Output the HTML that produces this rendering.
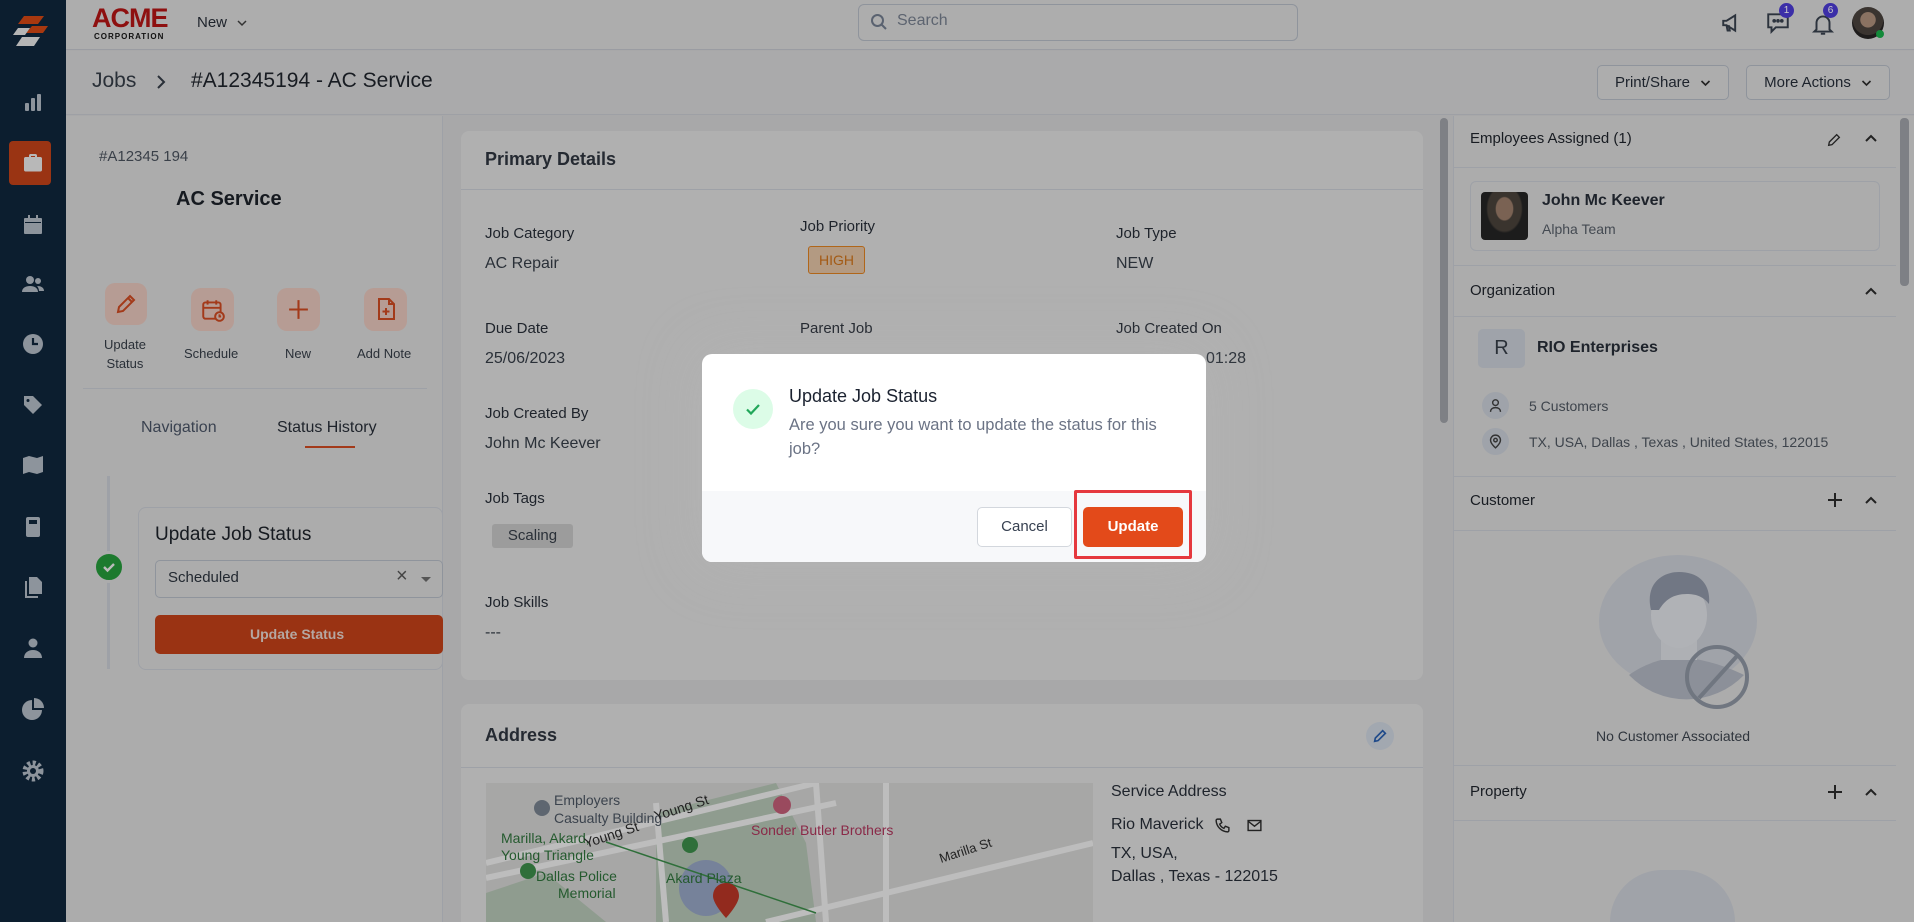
<!DOCTYPE html>
<html><head><meta charset="utf-8">
<style>
*{box-sizing:border-box;margin:0;padding:0}
html,body{width:1914px;height:922px;overflow:hidden}
body{background:#a8a8a9;font-family:"Liberation Sans",sans-serif;position:relative;color:#181c22}
.a{position:absolute}
.t{position:absolute;white-space:nowrap}
.ic{position:absolute;left:21px;width:24px;height:24px}
.btn{border:1px solid #8f949c;border-radius:5px;background:#adadad;font-size:15px;color:#1d232c;display:flex;align-items:center;justify-content:center;gap:10px}
.card{background:#b0b0b0;border-radius:8px}
.lbl{font-size:15px;color:#1e232b}
.val{font-size:16px;color:#2a3038}
.hl{position:absolute;height:1px;background:#9ea1a7}
.rt{font-size:15px;color:#181c22}
</style></head><body>

<div class="a" style="left:0;top:0;width:66px;height:922px;background:#0c1e2f">
  <svg class="a" style="left:10px;top:14px" width="40" height="40" viewBox="0 0 40 40"><polygon points="14,2 34,2 28,10 8,10" fill="#a8380f"/><polygon points="22,12 38,12 33,19 16,19" fill="#a8380f"/><polygon points="8,14 20,14 15,21 3,21" fill="#b5b5b5"/><polygon points="12,23 30,23 24,32 6,32" fill="#b5b5b5"/></svg>
  <svg class="ic" style="top:90px" viewBox="0 0 24 24" fill="#8d949c"><rect x="4" y="13" width="4" height="8" rx="1"/><rect x="10" y="8" width="4" height="13" rx="1"/><rect x="16" y="4" width="4" height="17" rx="1"/></svg>
  <div class="a" style="left:9px;top:141px;width:42px;height:44px;background:#9a3413;border-radius:4px"></div>
  <svg class="ic" style="top:151px" viewBox="0 0 24 24" fill="#b8b8b8"><path d="M8 6V4.5C8 3.7 8.7 3 9.5 3h5c.8 0 1.5.7 1.5 1.5V6h3.5C20.3 6 21 6.7 21 7.5V19c0 .8-.7 1.5-1.5 1.5h-15C3.7 20.5 3 19.8 3 19V7.5C3 6.7 3.7 6 4.5 6zm2 0h4V5h-4z"/></svg>
  <svg class="ic" style="top:213px" viewBox="0 0 24 24" fill="#8d949c"><path d="M7 2h2v3H7zM15 2h2v3h-2zM4 5h16c.6 0 1 .4 1 1v14c0 .6-.4 1-1 1H4c-.6 0-1-.4-1-1V6c0-.6.4-1 1-1zm0 4v1h16V9z"/></svg>
  <svg class="ic" style="top:272px" viewBox="0 0 24 24" fill="#8d949c"><circle cx="9" cy="8" r="4"/><circle cx="17" cy="9" r="3"/><path d="M1 20c0-4 3.5-6 8-6s8 2 8 6zM16 14c4 0 7 1.5 7 5h-5c0-2-1-4-2-5z"/></svg>
  <svg class="ic" style="top:332px" viewBox="0 0 24 24"><circle cx="12" cy="12" r="10" fill="#8d949c"/><path d="M12 6v6h5" stroke="#0c1e2f" stroke-width="2.2" fill="none"/></svg>
  <svg class="ic" style="top:393px" viewBox="0 0 24 24" fill="#8d949c"><path d="M3 3h9l9 9-9 9-9-9zM7 6a1.5 1.5 0 100 3 1.5 1.5 0 000-3z"/></svg>
  <svg class="ic" style="top:453px" viewBox="0 0 24 24" fill="#8d949c"><path d="M2 5l6-2 8 2 6-2v16l-6 2-8-2-6 2z"/></svg>
  <svg class="ic" style="top:515px" viewBox="0 0 24 24" fill="#8d949c"><rect x="5" y="2" width="14" height="20" rx="2"/><rect x="8" y="5" width="8" height="4" fill="#0c1e2f"/></svg>
  <svg class="ic" style="top:575px" viewBox="0 0 24 24" fill="#8d949c"><path d="M8 2h8l5 5v12H8z"/><path d="M4 6h2v15h11v2H4z"/></svg>
  <svg class="ic" style="top:636px" viewBox="0 0 24 24" fill="#8d949c"><circle cx="12" cy="7" r="4.5"/><path d="M3 22c0-5 4-8 9-8s9 3 9 8z"/></svg>
  <svg class="ic" style="top:697px" viewBox="0 0 24 24" fill="#8d949c"><path d="M11 3v10h10A10 10 0 1111 3z"/><path d="M13 1a10 10 0 0110 10H13z"/></svg>
  <svg class="ic" style="top:759px" viewBox="0 0 24 24"><circle cx="12" cy="12" r="8" fill="none" stroke="#8d949c" stroke-width="5" stroke-dasharray="3 2.3"/><circle cx="12" cy="12" r="6" fill="#8d949c"/><circle cx="12" cy="12" r="3" fill="#0c1e2f"/></svg>
</div>

<div class="a" style="left:66px;top:0;width:1848px;height:50px;background:#adadad;border-bottom:1px solid #9a9ca2"></div>
<div class="t" style="left:92px;top:3px;font:900 27px 'Liberation Sans';color:#8e1010;letter-spacing:-1px">ACME</div>
<div class="t" style="left:94px;top:32px;font:900 8px 'Liberation Sans';color:#111;letter-spacing:1px">CORPORATION</div>
<div class="t" style="left:197px;top:14px;font-size:15px;color:#1e232b">New</div>
<svg class="a" style="left:236px;top:18px" width="12" height="10" viewBox="0 0 12 10"><path d="M2 3l4 4 4-4" stroke="#333" stroke-width="1.5" fill="none"/></svg>
<div class="a" style="left:858px;top:4px;width:440px;height:37px;border:1px solid #8f949c;border-radius:6px"></div>
<svg class="a" style="left:870px;top:13px" width="18" height="18" viewBox="0 0 18 18"><circle cx="7.5" cy="7.5" r="5.5" stroke="#5a6270" stroke-width="2" fill="none"/><path d="M11.5 11.5l4.5 4.5" stroke="#5a6270" stroke-width="2"/></svg>
<div class="t" style="left:897px;top:12px;font-size:16px;color:#5d6470">Search</div>
<svg class="a" style="left:1720px;top:10px" width="26" height="26" viewBox="0 0 24 24" fill="none" stroke="#2c333d" stroke-width="1.8"><path d="M3 10v4h3l8 5V5L6 10z"/><path d="M6 14l1 5h2l-1-5"/></svg>
<svg class="a" style="left:1765px;top:10px" width="26" height="26" viewBox="0 0 24 24" fill="none" stroke="#2c333d" stroke-width="1.8"><path d="M3 4h18v12H10l-4 4v-4H3z"/><circle cx="8.5" cy="10" r=".8" fill="#2c333d"/><circle cx="12" cy="10" r=".8" fill="#2c333d"/><circle cx="15.5" cy="10" r=".8" fill="#2c333d"/></svg>
<div class="a" style="left:1779px;top:3px;width:15px;height:15px;border-radius:50%;background:#3b2ea8;color:#ccc;font-size:10px;text-align:center;line-height:15px">1</div>
<svg class="a" style="left:1810px;top:11px" width="26" height="26" viewBox="0 0 24 24" fill="none" stroke="#2c333d" stroke-width="1.8"><path d="M6 17V11a6 6 0 0112 0v6l2 2H4z"/><path d="M10 21h4"/></svg>
<div class="a" style="left:1823px;top:3px;width:15px;height:15px;border-radius:50%;background:#3b2ea8;color:#ccc;font-size:10px;text-align:center;line-height:15px">6</div>
<div class="a" style="left:1852px;top:7px;width:32px;height:32px;border-radius:50%;background:radial-gradient(circle at 50% 40%,#8a7262 0 30%,#3a3430 32% 60%,#1e1c1c 62%)"></div>
<div class="a" style="left:1876px;top:30px;width:8px;height:8px;border-radius:50%;background:#138a3a"></div>

<div class="a" style="left:66px;top:51px;width:1848px;height:64px;background:#aaaaab;border-bottom:1px solid #9ea0a5"></div>
<div class="t" style="left:92px;top:69px;font-size:21px;color:#2a3038">Jobs</div>
<svg class="a" style="left:155px;top:74px" width="12" height="16" viewBox="0 0 12 16"><path d="M3 2l6 6-6 6" stroke="#2a3038" stroke-width="2" fill="none"/></svg>
<div class="t" style="left:191px;top:69px;font-size:21px;color:#181c22">#A12345194 - AC Service</div>
<div class="a btn" style="left:1597px;top:65px;width:132px;height:35px">Print/Share <svg width="11" height="8" viewBox="0 0 11 8"><path d="M1.5 2l4 4 4-4" stroke="#222" stroke-width="1.6" fill="none"/></svg></div>
<div class="a btn" style="left:1746px;top:65px;width:144px;height:35px">More Actions <svg width="11" height="8" viewBox="0 0 11 8"><path d="M1.5 2l4 4 4-4" stroke="#222" stroke-width="1.6" fill="none"/></svg></div>

<div class="a" style="left:66px;top:116px;width:377px;height:806px;background:#acacac;border-right:1px solid #9ea1a7"></div>
<div class="t" style="left:99px;top:148px;font-size:15px;color:#3a4049">#A12345 194</div>
<div class="t" style="left:176px;top:188px;font-size:20px;font-weight:bold;color:#161a20">AC Service</div>
<div class="a" style="left:105px;top:283px;width:42px;height:42px;border-radius:10px;background:#b69c94"></div>
<div class="a" style="left:191px;top:288px;width:43px;height:43px;border-radius:10px;background:#b69c94"></div>
<div class="a" style="left:277px;top:288px;width:43px;height:43px;border-radius:10px;background:#b69c94"></div>
<div class="a" style="left:364px;top:288px;width:43px;height:43px;border-radius:10px;background:#b69c94"></div>
<svg class="a" style="left:114px;top:292px" width="24" height="24" viewBox="0 0 24 24" fill="none" stroke="#a33a1a" stroke-width="2"><path d="M4 20l1-5L16 4l4 4L9 19z"/><path d="M14 6l4 4"/></svg>
<svg class="a" style="left:200px;top:297px" width="26" height="26" viewBox="0 0 24 24" fill="none" stroke="#a33a1a" stroke-width="1.8"><rect x="3" y="5" width="16" height="15" rx="2"/><path d="M3 10h16M7 3v4M15 3v4"/><circle cx="18" cy="18" r="4" fill="#b69c94"/><path d="M18 16v2h1.5"/></svg>
<svg class="a" style="left:286px;top:297px" width="25" height="25" viewBox="0 0 24 24" stroke="#a33a1a" stroke-width="2"><path d="M12 3v18M3 12h18"/></svg>
<svg class="a" style="left:374px;top:297px" width="24" height="24" viewBox="0 0 24 24" fill="none" stroke="#a33a1a" stroke-width="2"><path d="M5 2h10l5 5v15H5z"/><path d="M15 2v5h5M12 11v7M8.5 14.5h7"/></svg>
<div class="t" style="left:104px;top:335px;font-size:13px;color:#2a3038;text-align:center;line-height:19px">Update<br>Status</div>
<div class="t" style="left:184px;top:346px;font-size:13px;color:#2a3038">Schedule</div>
<div class="t" style="left:285px;top:346px;font-size:13px;color:#2a3038">New</div>
<div class="t" style="left:357px;top:346px;font-size:13px;color:#2a3038">Add Note</div>
<div class="hl" style="left:83px;top:388px;width:344px"></div>
<div class="t" style="left:141px;top:419px;font-size:16px;color:#3a4250">Navigation</div>
<div class="t" style="left:277px;top:419px;font-size:16px;color:#1e232b">Status History</div>
<div class="a" style="left:305px;top:446px;width:50px;height:2px;background:#a33a1a"></div>
<div class="a" style="left:107px;top:476px;width:3px;height:193px;background:#9ea1a7"></div>
<div class="a" style="left:138px;top:507px;width:305px;height:163px;border:1px solid #9ea1a7;border-radius:8px;background:#acacac"></div>
<div class="a" style="left:93px;top:551px;width:32px;height:32px;border-radius:50%;background:#1d7a2e;border:3px solid #acacac"></div>
<svg class="a" style="left:100px;top:558px" width="18" height="18" viewBox="0 0 18 18"><path d="M4 9l3.5 3.5L14 6" stroke="#bbb" stroke-width="2.4" fill="none"/></svg>
<div class="t" style="left:155px;top:524px;font-size:19px;color:#161a20">Update Job Status</div>
<div class="a" style="left:155px;top:560px;width:288px;height:38px;border:1px solid #8f949c;border-radius:5px"></div>
<div class="t" style="left:168px;top:569px;font-size:15px;color:#222830">Scheduled</div>
<div class="t" style="left:396px;top:565px;font-size:20px;color:#444">×</div>
<div class="a" style="left:421px;top:577px;width:0;height:0;border-left:5px solid transparent;border-right:5px solid transparent;border-top:5px solid #555"></div>
<div class="a" style="left:155px;top:615px;width:288px;height:39px;border-radius:5px;background:#9a3313"></div>
<div class="t" style="left:250px;top:626px;font-size:14px;font-weight:bold;color:#b5a7a2">Update Status</div>

<div class="a card" style="left:461px;top:131px;width:962px;height:549px"></div>
<div class="t" style="left:485px;top:149px;font-size:18px;font-weight:bold;color:#252a32">Primary Details</div>
<div class="hl" style="left:461px;top:189px;width:962px"></div>
<div class="t lbl" style="left:485px;top:225px">Job Category</div>
<div class="t val" style="left:485px;top:255px">AC Repair</div>
<div class="t lbl" style="left:800px;top:218px">Job Priority</div>
<div class="a" style="left:808px;top:246px;width:57px;height:28px;border:1px solid #b0661a;border-radius:3px;background:#b39a82;color:#a35a14;font-size:14px;text-align:center;line-height:26px">HIGH</div>
<div class="t lbl" style="left:1116px;top:225px">Job Type</div>
<div class="t val" style="left:1116px;top:255px">NEW</div>
<div class="t lbl" style="left:485px;top:320px">Due Date</div>
<div class="t val" style="left:485px;top:350px">25/06/2023</div>
<div class="t lbl" style="left:800px;top:320px">Parent Job</div>
<div class="t lbl" style="left:1116px;top:320px">Job Created On</div>
<div class="t val" style="left:1206px;top:350px">01:28</div>
<div class="t lbl" style="left:485px;top:405px">Job Created By</div>
<div class="t val" style="left:485px;top:435px">John Mc Keever</div>
<div class="t lbl" style="left:485px;top:490px">Job Tags</div>
<div class="a" style="left:492px;top:524px;width:81px;height:24px;background:#9c9c9c;border-radius:3px;font-size:15px;color:#2a3038;text-align:center;line-height:24px">Scaling</div>
<div class="t lbl" style="left:485px;top:594px">Job Skills</div>
<div class="t val" style="left:485px;top:624px">---</div>

<div class="a card" style="left:461px;top:704px;width:962px;height:218px;border-radius:8px 8px 0 0"></div>
<div class="t" style="left:485px;top:725px;font-size:18px;font-weight:bold;color:#252a32">Address</div>
<div class="a" style="left:1366px;top:722px;width:28px;height:28px;border-radius:50%;background:#a2a8b0"></div>
<svg class="a" style="left:1372px;top:728px" width="16" height="16" viewBox="0 0 24 24" fill="none" stroke="#1f4a8a" stroke-width="2.5"><path d="M4 20l1-5L16 4l4 4L9 19z"/></svg>
<div class="hl" style="left:461px;top:767px;width:962px"></div>
<svg class="a" style="left:486px;top:783px" width="607" height="139" viewBox="0 0 607 139">
<rect width="607" height="139" fill="#a7a7a6"/>
<polygon points="170,30 290,0 320,60 330,139 170,139" fill="#8f9c8f"/>
<polygon points="0,110 60,90 120,139 0,139" fill="#8f9c8f"/>
<path d="M0 80 L330 0 M0 95 L350 20 M180 139 L170 20 M330 0 L340 139 M280 139 L607 60 M400 0 L400 139" stroke="#bdbdbd" stroke-width="6" fill="none"/>
<ellipse cx="220" cy="105" rx="27" ry="28" fill="#76829a"/>
<path d="M120 59L330 130" stroke="#2f6f3a" stroke-width="1.5"/>
<circle cx="56" cy="25" r="8" fill="#5e6670"/><circle cx="204" cy="62" r="8" fill="#2f6f3a"/><circle cx="42" cy="88" r="8" fill="#2f6f3a"/><circle cx="296" cy="22" r="9" fill="#9a4a5e"/>
<path d="M240 100c-8 0-13 6-13 13 0 8 13 22 13 22s13-14 13-22c0-7-5-13-13-13z" fill="#922a1e"/>
<text x="68" y="22" font-family="Liberation Sans" font-size="14" fill="#3b434d">Employers</text>
<text x="68" y="40" font-family="Liberation Sans" font-size="14" fill="#3b434d">Casualty Building</text>
<text x="15" y="60" font-family="Liberation Sans" font-size="14" fill="#245a2e">Marilla, Akard,</text>
<text x="15" y="77" font-family="Liberation Sans" font-size="14" fill="#245a2e">Young Triangle</text>
<text x="50" y="98" font-family="Liberation Sans" font-size="14" fill="#245a2e">Dallas Police</text>
<text x="72" y="115" font-family="Liberation Sans" font-size="14" fill="#245a2e">Memorial</text>
<text x="180" y="100" font-family="Liberation Sans" font-size="14" fill="#245a2e">Akard Plaza</text>
<text x="265" y="52" font-family="Liberation Sans" font-size="14" fill="#8a2a48">Sonder Butler Brothers</text>
<text x="170" y="38" font-family="Liberation Sans" font-size="14" fill="#222" transform="rotate(-18 170 38)">Young St</text>
<text x="100" y="65" font-family="Liberation Sans" font-size="14" fill="#222" transform="rotate(-18 100 65)">Young St</text>
<text x="455" y="80" font-family="Liberation Sans" font-size="13" fill="#222" transform="rotate(-18 455 80)">Marilla St</text>
</svg>
<div class="t" style="left:1111px;top:783px;font-size:16px;color:#1e232b">Service Address</div>
<div class="t" style="left:1111px;top:816px;font-size:16px;color:#1e232b">Rio Maverick</div>
<svg class="a" style="left:1214px;top:817px" width="17" height="17" viewBox="0 0 24 24" fill="none" stroke="#222" stroke-width="2"><path d="M5 3h4l2 5-3 2a11 11 0 006 6l2-3 5 2v4a2 2 0 01-2 2A17 17 0 013 5a2 2 0 012-2z"/></svg>
<svg class="a" style="left:1246px;top:817px" width="17" height="17" viewBox="0 0 24 24" fill="none" stroke="#222" stroke-width="2"><rect x="3" y="5" width="18" height="14"/><path d="M3 6l9 7 9-7"/></svg>
<div class="t" style="left:1111px;top:845px;font-size:16px;color:#1e232b">TX, USA,</div>
<div class="t" style="left:1111px;top:868px;font-size:16px;color:#1e232b">Dallas , Texas - 122015</div>
<div class="a" style="left:1440px;top:118px;width:8px;height:305px;border-radius:4px;background:#7e8085"></div>

<div class="a" style="left:1453px;top:116px;width:461px;height:806px;background:#acacac;border-left:1px solid #9ea1a7"></div>
<div class="a" style="left:1610px;top:870px;width:125px;height:52px;border-radius:63px 63px 0 0;background:#a0a3a9"></div>
<div class="t rt" style="left:1470px;top:130px">Employees Assigned (1)</div>
<svg class="a" style="left:1826px;top:132px" width="16" height="16" viewBox="0 0 24 24" fill="none" stroke="#222" stroke-width="2"><path d="M4 20l1-5L16 4l4 4L9 19z"/></svg>
<svg class="a" style="left:1864px;top:133px" width="14" height="10" viewBox="0 0 14 10"><path d="M2 8l5-5 5 5" stroke="#222" stroke-width="2" fill="none"/></svg>
<div class="hl" style="left:1453px;top:167px;width:443px"></div>
<div class="a" style="left:1470px;top:181px;width:410px;height:70px;border:1px solid #9ea1a7;border-radius:6px"></div>
<div class="a" style="left:1481px;top:192px;width:47px;height:48px;border-radius:4px;background:radial-gradient(ellipse at 50% 35%,#7a6253 0 25%,#3a342e 28% 50%,#1c1c1c 55%)"></div>
<div class="t" style="left:1542px;top:192px;font-size:16px;font-weight:bold;color:#1e232b">John Mc Keever</div>
<div class="t" style="left:1542px;top:221px;font-size:14px;color:#444a52">Alpha Team</div>
<div class="hl" style="left:1453px;top:265px;width:443px"></div>
<div class="t rt" style="left:1470px;top:282px">Organization</div>
<svg class="a" style="left:1864px;top:286px" width="14" height="10" viewBox="0 0 14 10"><path d="M2 8l5-5 5 5" stroke="#222" stroke-width="2" fill="none"/></svg>
<div class="hl" style="left:1453px;top:316px;width:443px"></div>
<div class="a" style="left:1478px;top:329px;width:47px;height:39px;border-radius:5px;background:#9fa3aa;font-size:20px;color:#2a3038;text-align:center;line-height:39px">R</div>
<div class="t" style="left:1537px;top:339px;font-size:16px;font-weight:bold;color:#1e232b">RIO Enterprises</div>
<div class="a" style="left:1482px;top:392px;width:27px;height:27px;border-radius:50%;background:#9fa3aa"></div>
<svg class="a" style="left:1487px;top:397px" width="17" height="17" viewBox="0 0 24 24" fill="none" stroke="#333" stroke-width="2"><circle cx="12" cy="8" r="4"/><path d="M5 21c0-4 3-6 7-6s7 2 7 6"/></svg>
<div class="t" style="left:1529px;top:398px;font-size:14px;color:#3e444c">5 Customers</div>
<div class="a" style="left:1482px;top:428px;width:27px;height:27px;border-radius:50%;background:#9fa3aa"></div>
<svg class="a" style="left:1487px;top:433px" width="17" height="17" viewBox="0 0 24 24" fill="none" stroke="#333" stroke-width="2"><path d="M12 21s-7-6-7-11a7 7 0 0114 0c0 5-7 11-7 11z"/><circle cx="12" cy="10" r="2.5"/></svg>
<div class="t" style="left:1529px;top:434px;font-size:14px;color:#3e444c">TX, USA, Dallas , Texas , United States, 122015</div>
<div class="hl" style="left:1453px;top:476px;width:443px"></div>
<div class="t rt" style="left:1470px;top:492px">Customer</div>
<svg class="a" style="left:1827px;top:492px" width="16" height="16" viewBox="0 0 16 16"><path d="M8 1v14M1 8h14" stroke="#222" stroke-width="2"/></svg>
<svg class="a" style="left:1864px;top:495px" width="14" height="10" viewBox="0 0 14 10"><path d="M2 8l5-5 5 5" stroke="#222" stroke-width="2" fill="none"/></svg>
<div class="hl" style="left:1453px;top:530px;width:443px"></div>
<div class="a" style="left:1599px;top:555px;width:158px;height:132px;border-radius:50%;background:#a0a3a9"></div>
<svg class="a" style="left:1599px;top:530px" width="200" height="220" viewBox="0 0 200 220">
<path d="M30 145c20-15 45-18 50-18s35 3 65 18a80 80 0 01-115 0z" fill="#8c9099"/>
<rect x="62" y="100" width="36" height="30" fill="#aeb0b4"/>
<ellipse cx="80" cy="85" rx="28" ry="33" fill="#b0b2b6"/>
<path d="M52 80c-6-25 10-38 28-38 20 0 32 12 30 32-6-8-14-10-22-10-14 0-22 6-28 16z" fill="#717784"/>
<circle cx="118" cy="147" r="30" fill="none" stroke="#707680" stroke-width="4"/>
<path d="M100 168l38-42" stroke="#707680" stroke-width="4"/>
</svg>
<div class="t" style="left:1596px;top:728px;font-size:14px;color:#2f353d">No Customer Associated</div>
<div class="hl" style="left:1453px;top:765px;width:443px"></div>
<div class="t rt" style="left:1470px;top:783px">Property</div>
<svg class="a" style="left:1827px;top:784px" width="16" height="16" viewBox="0 0 16 16"><path d="M8 1v14M1 8h14" stroke="#222" stroke-width="2"/></svg>
<svg class="a" style="left:1864px;top:787px" width="14" height="10" viewBox="0 0 14 10"><path d="M2 8l5-5 5 5" stroke="#222" stroke-width="2" fill="none"/></svg>
<div class="hl" style="left:1453px;top:820px;width:443px"></div>
<div class="a" style="left:1900px;top:118px;width:9px;height:168px;border-radius:4px;background:#7e8085"></div>

<div class="a" style="left:702px;top:354px;width:504px;height:208px;background:#fff;border-radius:10px;overflow:hidden;box-shadow:0 0 60px 10px rgba(190,190,190,.2)">
  <div class="a" style="left:0;top:137px;width:504px;height:71px;background:#f7f8fa"></div>
  <div class="a" style="left:31px;top:35px;width:40px;height:40px;border-radius:50%;background:#dcfce7"></div>
  <svg class="a" style="left:41px;top:45px" width="20" height="20" viewBox="0 0 20 20"><path d="M4 10.5l4 4L16 6" stroke="#22a75a" stroke-width="2.2" fill="none"/></svg>
  <div class="t" style="left:87px;top:32px;font-size:18px;color:#1b2230">Update Job Status</div>
  <div class="a" style="left:87px;top:59px;width:385px;font-size:16.5px;color:#6b7385;line-height:24px">Are you sure you want to update the status for this job?</div>
  <div class="a" style="left:275px;top:153px;width:95px;height:40px;border:1px solid #d3d7dd;border-radius:5px;background:#fff;font-size:15px;color:#374151;text-align:center;line-height:38px">Cancel</div>
  <div class="a" style="left:372px;top:136px;width:118px;height:69px;border:3px solid #e5383e;border-radius:2px"></div>
  <div class="a" style="left:381px;top:153px;width:100px;height:40px;border-radius:5px;background:#e34a1a;font-size:15px;font-weight:bold;color:#fff;text-align:center;line-height:40px">Update</div>
</div>
</body></html>
